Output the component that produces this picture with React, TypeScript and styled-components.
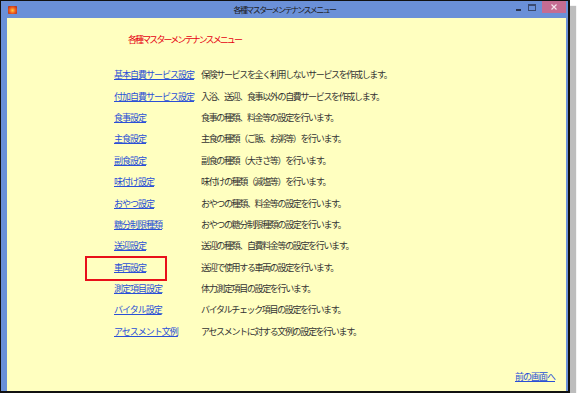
import { Fragment } from "react";
import { createGlobalStyle, styled } from "styled-components";

const GlobalStyle = createGlobalStyle`
    html, body {
        margin: 0;
        padding: 0;
        background: #ffffff;
    }
    body {
        font-family: "Noto Sans CJK JP", "Noto Sans", sans-serif;
        color: #333333;
    }
`;

const Window = styled.div`
    width: 567px;
    height: 390px;
    display: flex;
    flex-direction: column;
    background: #6a90d8;
    border: 1px solid #111;
    border-right-width: 2px;
    border-bottom-width: 2px;
    box-shadow: 6px 6px 1px #bdbdbd;
`;

const TitleBar = styled.div`
    height: 17px;
    display: flex;
    align-items: center;
    padding: 0 2px 0 7px;
`;

const AppIcon = styled.div`
    width: 9px;
    height: 8px;
    background: radial-gradient(circle at 50% 55%, #ffd040 0%, #f06020 45%, #a02018 100%);
    border-radius: 1px;
`;

const Title = styled.div`
    flex: 1;
    text-align: center;
    font-size: 8px;
    letter-spacing: -1.6px;
    color: #1a1a1a;
    padding-left: 40px;
`;

const Controls = styled.div`
    display: flex;
    align-items: flex-start;
    height: 100%;
`;

const CtrlBtn = styled.div`
    width: 13px;
    height: 13px;
    display: flex;
    align-items: center;
    justify-content: center;
`;

const CloseBtn = styled.div`
    width: 24px;
    height: 12px;
    margin-left: 4px;
    background: #c56c92;
    display: flex;
    align-items: center;
    justify-content: center;
`;

const Body = styled.div`
    flex: 1;
    margin: 0 2px 0 6px;
    background: #ffffc0;
    display: flex;
    flex-direction: column;
    padding: 14px 11px 8px 0;
`;

const Heading = styled.h1`
    margin: 0 0 0 121px;
    font-size: 9px;
    font-weight: normal;
    letter-spacing: -1.9px;
    color: #e60012;
    line-height: 16px;
`;

const MenuList = styled.div`
    display: grid;
    grid-template-columns: 87px auto;
    grid-auto-rows: 21.4px;
    align-items: center;
    margin: 16px 0 0 107px;
`;

const Cell = styled.div`
    position: relative;
    height: 100%;
    display: flex;
    align-items: center;
`;

const Highlight = styled.div`
    position: absolute;
    left: -29px;
    top: -1px;
    width: 78px;
    height: 21px;
    border: 2px solid #e8101a;
`;

const MenuLink = styled.a`
    font-size: 9px;
    letter-spacing: -1px;
    color: #2a4fd6;
    text-decoration: underline;
    text-underline-offset: 1px;
    cursor: pointer;
    white-space: nowrap;
`;

const Desc = styled.span`
    font-size: 9px;
    letter-spacing: -1.35px;
    color: #333;
    white-space: nowrap;
`;

const Footer = styled.div`
    margin-top: auto;
    display: flex;
    justify-content: flex-end;
`;

const items = [
    { label: "基本自費サービス設定", desc: "保険サービスを全く利用しないサービスを作成します。" },
    { label: "付加自費サービス設定", desc: "入浴、送迎、食事以外の自費サービスを作成します。" },
    { label: "食事設定", desc: "食事の種類、料金等の設定を行います。" },
    { label: "主食設定", desc: "主食の種類（ご飯、お粥等）を行います。" },
    { label: "副食設定", desc: "副食の種類（大きさ等）を行います。" },
    { label: "味付け設定", desc: "味付けの種類（減塩等）を行います。" },
    { label: "おやつ設定", desc: "おやつの種類、料金等の設定を行います。" },
    { label: "糖分制限種類", desc: "おやつの糖分制限種類の設定を行います。" },
    { label: "送迎設定", desc: "送迎の種類、自費料金等の設定を行います。" },
    { label: "車両設定", desc: "送迎で使用する車両の設定を行います。", boxed: true },
    { label: "測定項目設定", desc: "体力測定項目の設定を行います。" },
    { label: "バイタル設定", desc: "バイタルチェック項目の設定を行います。" },
    { label: "アセスメント文例", desc: "アセスメントに対する文例の設定を行います。" },
];

export default function App() {
    return (
        <>
            <GlobalStyle />
            <Window>
                <TitleBar>
                    <AppIcon />
                    <Title>各種マスターメンテナンスメニュー</Title>
                    <Controls>
                        <CtrlBtn>
                            <svg width="7" height="7" viewBox="0 0 7 7">
                                <rect x="1" y="5" width="5" height="2" fill="#2a3550" />
                            </svg>
                        </CtrlBtn>
                        <CtrlBtn>
                            <svg width="8" height="7" viewBox="0 0 8 7">
                                <rect x="0.5" y="0.5" width="7" height="6" fill="none" stroke="#3a4a70" />
                                <rect x="0.5" y="0.5" width="7" height="1.5" fill="#3a4a70" />
                            </svg>
                        </CtrlBtn>
                        <CloseBtn>
                            <svg width="6" height="6" viewBox="0 0 6 6">
                                <path d="M0.5 0.5 L5.5 5.5 M5.5 0.5 L0.5 5.5" stroke="#f4e4ec" strokeWidth="1.2" />
                            </svg>
                        </CloseBtn>
                    </Controls>
                </TitleBar>
                <Body>
                    <Heading>各種マスターメンテナンスメニュー</Heading>
                    <MenuList>
                        {items.map((it) => (
                            <Fragment key={it.label}>
                                <Cell>
                                    {it.boxed ? <Highlight /> : null}
                                    <MenuLink>{it.label}</MenuLink>
                                </Cell>
                                <Cell>
                                    <Desc>{it.desc}</Desc>
                                </Cell>
                            </Fragment>
                        ))}
                    </MenuList>
                    <Footer>
                        <MenuLink>前の画面へ</MenuLink>
                    </Footer>
                </Body>
            </Window>
        </>
    );
}
